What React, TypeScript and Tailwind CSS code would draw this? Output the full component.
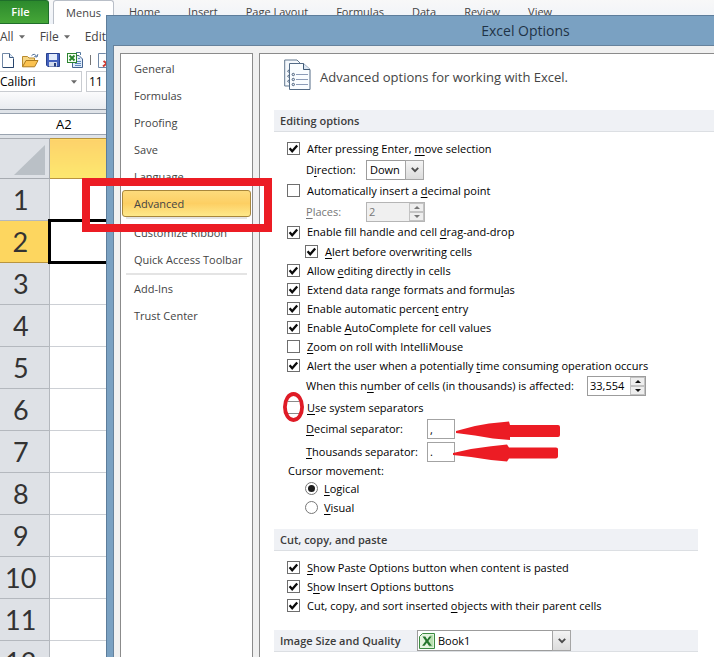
import React from "react";

/* Renders a caption; the letter after "&" is the underlined access key. */
function Caption({ text }: { text: string }) {
  const at = text.indexOf("&");
  if (at < 0) return <span>{text}</span>;
  return (
    <span className="whitespace-pre">
      {text.slice(0, at)}
      <span className="underline underline-offset-2">{text[at + 1]}</span>
      {text.slice(at + 2)}
    </span>
  );
}

function CheckRow({
  text,
  checked = false,
  className = "h-[19px]",
  circled = false,
}: {
  text: string;
  checked?: boolean;
  className?: string;
  circled?: boolean;
}) {
  return (
    <label className={`flex items-center gap-[7px] whitespace-nowrap ${className}`}>
      <span className="relative grid size-[13px] shrink-0">
        <input
          type="checkbox"
          defaultChecked={checked}
          className={`peer col-start-1 row-start-1 size-[13px] appearance-none border bg-white ${
            circled ? "border-x-white border-y-[#8a8a8a]" : "border-[#6e6e6e]"
          }`}
        />
        <svg
          viewBox="0 0 13 13"
          className="pointer-events-none invisible col-start-1 row-start-1 size-[13px] peer-checked:visible"
        >
          <path d="M2.6 6.2 L5.2 9.3 L10.2 3.4" fill="none" stroke="#0a0a0a" strokeWidth="2.3" />
        </svg>
        {circled && (
          <svg viewBox="0 0 22 30" className="pointer-events-none absolute -top-[9px] -left-[4px] h-[30px] w-[22px] max-w-none">
            <ellipse cx="10.5" cy="15" rx="8.6" ry="13" fill="none" stroke="#df1b26" strokeWidth="3.8" />
          </svg>
        )}
      </span>
      <Caption text={text} />
    </label>
  );
}

function RadioRow({ text, checked = false }: { text: string; checked?: boolean }) {
  return (
    <label className="ml-[18px] flex h-[19px] items-center gap-[6px]">
      <span className="grid size-[13px] shrink-0 place-items-center">
        <input
          type="radio"
          name="cursor-movement"
          defaultChecked={checked}
          className="peer col-start-1 row-start-1 size-[13px] appearance-none rounded-full border border-[#777] bg-white"
        />
        <span className="pointer-events-none invisible col-start-1 row-start-1 size-[7px] rounded-full bg-[#1c1c1c] peer-checked:visible" />
      </span>
      <Caption text={text} />
    </label>
  );
}

function Chevron() {
  return (
    <span className="pointer-events-none col-start-1 row-start-1 flex w-[19px] items-center justify-center justify-self-end border border-[#a5a5a5] bg-linear-to-b from-[#f4f4f4] to-[#dcdcdc]">
      <svg viewBox="0 0 8 6" className="h-[6px] w-[8px]">
        <path d="M0.8 0.8 L4 4.2 L7.2 0.8" fill="none" stroke="#4c4c4c" strokeWidth="1.9" />
      </svg>
    </span>
  );
}

function Spinner({ id, value, disabled = false }: { id: string; value: string; disabled?: boolean }) {
  const ink = disabled ? "#777" : "#111";
  return (
    <span className={`flex h-5 w-[59px] border ${disabled ? "border-[#b5b5b5] bg-[#f0f0f0] text-[#777]" : "border-[#9c9c9c] bg-white"}`}>
      <input id={id} type="text" defaultValue={value} disabled={disabled} className="w-0 min-w-0 flex-1 bg-transparent pl-[2px]" />
      <span className="flex w-[15px] shrink-0 flex-col">
        <button type="button" aria-label="Increase" disabled={disabled} className="flex flex-1 items-center justify-center border border-[#c3c3c3] bg-[#eeeeee]">
          <svg viewBox="0 0 6 3" className="h-[3px] w-[6px]"><path d="M0 3 L3 0 L6 3Z" fill={ink} /></svg>
        </button>
        <button type="button" aria-label="Decrease" disabled={disabled} className="flex flex-1 items-center justify-center border border-[#c3c3c3] bg-[#eeeeee]">
          <svg viewBox="0 0 6 3" className="h-[3px] w-[6px]"><path d="M0 0 L3 3 L6 0Z" fill={ink} /></svg>
        </button>
      </span>
    </span>
  );
}

function Arrow() {
  return (
    <svg viewBox="0 0 106 20" className="pointer-events-none absolute top-[2px] left-full h-5 w-[106px] max-w-none">
      <path d="M1 10 L20 5 L34 2.6 L54 0.6 L55 4 H103 Q105 4 105 6 V14 Q105 16 103 16 H55 V19 L38 17.6 L20 14.6 L1 12Z" fill="#ec1c24" />
    </svg>
  );
}

function SmallArrow() {
  return (
    <svg viewBox="0 0 106 18" className="pointer-events-none absolute top-[2px] right-[-104px] h-[18px] w-[106px] max-w-none">
      <path d="M0 9 L18 5 L38 2.2 L54 0.4 L56 3.4 H103 Q105 3.4 105 5 V12.6 Q105 14.4 103 14.4 H56 L54 17.4 L38 16 L18 13 L0 11Z" fill="#ec1c24" />
    </svg>
  );
}

function SeparatorRow({
  id,
  label,
  value,
  className,
  children,
}: {
  id: string;
  label: string;
  value: string;
  className: string;
  children: React.ReactNode;
}) {
  return (
    <div className={`ml-[19px] flex items-center ${className}`}>
      <label htmlFor={id} className="w-[121px] whitespace-nowrap">
        <Caption text={label} />
      </label>
      <span className="relative flex">
        <input id={id} type="text" defaultValue={value} className="h-5 w-7 border border-[#a3a3a3] bg-white pl-[2px]" />
        {children}
      </span>
    </div>
  );
}

function NavItem({ children }: { children: string }) {
  return (
    <button type="button" className="flex h-[27px] items-center px-3 text-left whitespace-nowrap">
      {children}
    </button>
  );
}

function Rule() {
  return <div className="mx-1 h-[2px] bg-[#e4e4e4]" />;
}

function Caret() {
  return (
    <svg viewBox="0 0 6 4" className="h-1 w-[6px]">
      <path d="M0 0.3 H6 L3 3.8Z" fill="#6a6a6a" />
    </svg>
  );
}

function ToolIcons() {
  return (
    <div className="flex h-[22px] items-center">
      <button type="button" aria-label="New" className="mr-2 ml-[2px]">
        <svg viewBox="0 0 12 15" className="h-[15px] w-3">
          <path d="M0.5 0.5 H7.5 L11.5 4.5 V14.5 H0.5Z" fill="#fdfeff" stroke="#7188a6" />
          <path d="M7.5 0.5 V4.5 H11.5" fill="#dbe8f7" stroke="#3d5a80" />
          <path d="M1 14.5 H11.5 V6" fill="none" stroke="#26436b" />
        </svg>
      </button>
      <button type="button" aria-label="Open" className="mr-[7px]">
        <svg viewBox="0 0 17 15" className="h-[15px] w-[17px]">
          <path d="M0.5 13.5 V3.5 H5.5 L7 5 H12.5 V7.5" fill="#f6d684" stroke="#b98a2d" />
          <path d="M0.5 13.8 L4 7.5 H16 L12.6 13.8Z" fill="#fbc250" stroke="#ad7b1d" />
          <path d="M9.5 2.7 Q12.5 -0.4 14.6 3.4 M12.3 3.5 L15 4 L15.8 1.2" fill="none" stroke="#51719b" />
        </svg>
      </button>
      <button type="button" aria-label="Save" className="mr-[7px]">
        <svg viewBox="0 0 14 14" className="h-[14px] w-[14px]">
          <path d="M0.5 0.5 H13.5 V13.5 H1.8 L0.5 12.2Z" fill="#4361bd" stroke="#27418e" />
          <rect x="3" y="1" width="8" height="6" fill="#e1ebfb" />
          <rect x="3" y="9" width="8" height="4.5" fill="#d3dcec" />
          <rect x="8" y="10" width="2" height="3.5" fill="#243c7c" />
        </svg>
      </button>
      <button type="button" aria-label="Export">
        <svg viewBox="0 0 16 16" className="size-4">
          <path d="M5.5 3.5 H12 L15.5 7 V15.5 H5.5Z" fill="#e0ecfa" stroke="#456491" />
          <path d="M8 9.5 H14 M8 11.5 H14 M8 13.5 H14 M11 6.5 H13" stroke="#5e88bd" />
          <rect x="0.5" y="1.5" width="9" height="9" fill="#f7fff5" stroke="#2c8430" />
          <path d="M2.5 3.5 L7.5 8.5 M7.5 3.5 L2.5 8.5" stroke="#27842c" strokeWidth="1.9" />
          <path d="M9 0.5 H13.5 V3" fill="none" stroke="#53789f" />
        </svg>
      </button>
      <span className="mx-[7px] h-[10px] w-px bg-[#777]" />
      <button type="button" aria-label="Delete">
        <svg viewBox="0 0 14 15" className="h-[15px] w-[14px]">
          <path d="M0.5 0.5 H7.5 L11.5 4.5 V14.5 H0.5Z" fill="#fdfeff" stroke="#7188a6" />
          <path d="M5 13.5 L13 7 M5.5 8 L13 13.5" stroke="#cf3a31" strokeWidth="2" />
        </svg>
      </button>
    </div>
  );
}

const ribbonTabs = ["Home", "Insert", "Page Layout", "Formulas", "Data", "Review", "View"];
const sheetRows = Array.from({ length: 12 }, (_, i) => i + 1);

function Workbook() {
  return (
    <div className="text-[12px] leading-4 text-[#444]">
      <div className="flex h-6 bg-linear-to-b from-[#f8f8f8] to-[#eef2f8] text-[11px]">
        <button type="button" className="w-[49px] rounded-tr-[3px] border border-l-0 border-[#1f6e2b] bg-linear-to-b from-[#2c8a2d] to-[#45a637] pr-[7px] text-white">
          <span className="font-semibold">File</span>
        </button>
        <button type="button" className="ml-1 w-[61px] rounded-t-[3px] border border-b-0 border-[#b9bfc8] bg-white">
          Menus
        </button>
        <nav className="ml-px flex">
          {ribbonTabs.map((t) => (
            <button key={t} type="button" className="px-[14px] whitespace-nowrap">
              {t}
            </button>
          ))}
        </nav>
      </div>
      <div className="flex h-[25px] items-center gap-[15px]">
        <button type="button" className="flex items-center gap-[5px]">All <Caret /></button>
        <button type="button" className="flex items-center gap-[5px]">File <Caret /></button>
        <button type="button">Edit</button>
      </div>
      <ToolIcons />
      <div className="flex h-[21px] gap-1 text-black">
        <button type="button" className="flex w-[82px] items-center justify-between border border-l-0 border-[#c9ccd1] bg-white pr-1">
          Calibri <Caret />
        </button>
        <button type="button" className="w-12 border border-[#c9ccd1] bg-white pl-[2px] text-left">11</button>
      </div>
      <div className="h-[18px] border-b border-[#8a929c] bg-linear-to-b from-[#fbfbfc] to-[#e9ecf0]" />
      <div className="h-[3px] bg-[#dfe3e8]" />
      <div className="flex h-[22px] items-center border-y border-[#9aa4b0] bg-white pl-[56px] text-[13px] text-black">A2</div>
      <div className="h-[3px] bg-[#dfe3e8]" />
      <table className="w-full table-fixed border-collapse">
        <thead>
          <tr className="h-10">
            <th className="w-[49px] border border-l-0 border-[#a7abb1] bg-[#dee1e6] p-0">
              <svg viewBox="0 0 48 38" className="h-[38px] w-12">
                <path d="M45 5 V35 H14Z" fill="#bac0c6" />
              </svg>
            </th>
            <th className="border border-[#b9953f] bg-linear-to-b from-[#fdd26a] to-[#fde86f]" />
          </tr>
        </thead>
        <tbody>
          {sheetRows.map((n) => (
            <tr key={n} className="h-[42px]">
              <th
                className={`border border-l-0 p-0 pr-[7px] font-[Lato,sans-serif] text-[27px] font-normal text-[#333] ${
                  n === 2 ? "border-[#b9953f] bg-[#fdd65f]" : "border-[#b4b8be] bg-[#dee1e6]"
                }`}
              >
                {n}
              </th>
              <td className={n === 2 ? "border-[3px] border-black bg-white" : "border border-[#cdd0d5] bg-white"} />
            </tr>
          ))}
        </tbody>
      </table>
    </div>
  );
}

function Navigation() {
  return (
    <nav className="flex w-[133px] shrink-0 flex-col border border-b-0 border-[#8b8b8b] bg-white text-[#444]">
      <div className="flex flex-col px-px pt-px">
        <NavItem>General</NavItem>
        <NavItem>Formulas</NavItem>
        <NavItem>Proofing</NavItem>
        <NavItem>Save</NavItem>
        <NavItem>Language</NavItem>
        <div className="relative z-10 flex">
          <button type="button" className="h-[27px] flex-1 rounded-[3px] border border-[#a8873c] bg-linear-to-b from-[#fddb7c] via-[#fdcf63] to-[#fee98a] pl-[11px] text-left">
            Advanced
          </button>
          <div className="pointer-events-none absolute -top-3 -right-[21px] -bottom-[15px] -left-10 border-8 border-[#ec1c24]" />
        </div>
        <Rule />
        <NavItem>Customize Ribbon</NavItem>
        <NavItem>Quick Access Toolbar</NavItem>
        <Rule />
        <NavItem>Add-Ins</NavItem>
        <NavItem>Trust Center</NavItem>
      </div>
    </nav>
  );
}

function Band({ children, className = "mr-4" }: { children: React.ReactNode; className?: string }) {
  return (
    <div className={`ml-[14px] flex h-[22px] items-center border-b border-[#dcdfe3] bg-[#eff1f5] pl-[6px] font-semibold text-[#3c3c3c] ${className}`}>
      {children}
    </div>
  );
}

function OptionsPanel() {
  return (
    <main className="min-w-0 flex-1 border-t border-l border-[#8b8b8b] bg-white text-black">
      <header className="flex h-14 items-start pt-[5px] pl-6">
        <svg viewBox="0 0 28 32" className="h-8 w-7 shrink-0">
          <path d="M0.7 1 H13 L17 5 V27 H0.7Z" fill="#f4f8fc" stroke="#62788f" />
          <path d="M5.5 4.5 H19.5 L26 10.5 V30.5 H5.5Z" fill="#fafdff" stroke="#536b86" />
          <path d="M19.5 4.5 V10.5 H26" fill="#dce7f3" stroke="#3f5874" />
          <path d="M12 15.5 H24 M12 20.5 H24 M12 25.5 H24" stroke="#8c9cb8" />
          <g fill="#dbe4f0" stroke="#52667f">
            <circle cx="9.3" cy="15.5" r="1.2" />
            <circle cx="9.3" cy="20.5" r="1.2" />
            <circle cx="9.3" cy="25.5" r="1.2" />
          </g>
          <path d="M5 11 Q2.5 11.6 4.5 13.5 M5 16 Q2.5 16.6 4.5 18.5 M5 21 Q2.5 21.6 4.5 23.5" fill="none" stroke="#52667f" />
        </svg>
        <h1 className="ml-2 pt-2 text-[13px] leading-5 whitespace-nowrap text-[#444]">Advanced options for working with Excel.</h1>
      </header>

      <Band className="">Editing options</Band>
      <section className="pt-[6px] pl-[27px]">
        <CheckRow text="After pressing Enter, &move selection" checked className="h-[21px]" />
        <div className="ml-[19px] flex h-[21px] items-center">
          <label htmlFor="direction" className="w-[60px]"><Caption text="D&irection:" /></label>
          <span className="grid h-5 w-[58px]">
            <select id="direction" className="col-start-1 row-start-1 appearance-none border border-[#9c9c9c] bg-white pl-[3px]">
              <option>Down</option>
            </select>
            <Chevron />
          </span>
        </div>
        <CheckRow text="Automatically insert a &decimal point" className="h-[21px]" />
        <div className="ml-[19px] flex h-[21px] items-center text-[#777]">
          <label htmlFor="places" className="w-[60px]"><Caption text="&Places:" /></label>
          <Spinner id="places" value="2" disabled />
        </div>
        <CheckRow text="Enable fill handle and cell &drag-and-drop" checked className="h-5" />
        <CheckRow text="&Alert before overwriting cells" checked className="ml-[18px] h-[19px]" />
        <CheckRow text="Allow &editing directly in cells" checked />
        <CheckRow text="Extend data range formats and formu&las" checked />
        <CheckRow text="Enable automatic percen&t entry" checked />
        <CheckRow text="Enable &AutoComplete for cell values" checked />
        <CheckRow text="&Zoom on roll with IntelliMouse" />
        <CheckRow text="Alert the user when a potentially &time consuming operation occurs" checked />
        <div className="ml-[19px] flex h-[22px] items-center">
          <label htmlFor="cells" className="w-[281px] whitespace-nowrap"><Caption text="When this n&umber of cells (in thousands) is affected:" /></label>
          <Spinner id="cells" value="33,554" />
        </div>
        <CheckRow text="&Use system separators" className="h-[21px]" circled />
        <SeparatorRow id="decimal" label="&Decimal separator:" value="," className="h-[22px]">
          <Arrow />
        </SeparatorRow>
        <SeparatorRow id="thousands" label="&Thousands separator:" value="." className="h-[23px]">
          <SmallArrow />
        </SeparatorRow>
        <fieldset>
          <legend className="ml-px h-4 leading-4">Cursor movement:</legend>
          <RadioRow text="&Logical" checked />
          <RadioRow text="&Visual" />
        </fieldset>
      </section>

      <div className="h-3" />
      <Band>Cut, copy, and paste</Band>
      <section className="pt-[7px] pb-[15px] pl-[27px]">
        <CheckRow text="&Show Paste Options button when content is pasted" checked />
        <CheckRow text="S&how Insert Options buttons" checked />
        <CheckRow text="Cut, copy, and sort inserted &objects with their parent cells" checked />
      </section>

      <Band>
        <label htmlFor="book" className="w-[137px] whitespace-nowrap">Image Size and Quality</label>
        <span className="grid h-[21px] w-[154px] font-normal text-black">
          <select id="book" className="col-start-1 row-start-1 appearance-none border border-[#9c9c9c] bg-white pl-5">
            <option>Book1</option>
          </select>
          <svg viewBox="0 0 16 16" className="pointer-events-none col-start-1 row-start-1 ml-[2px] size-4 self-center">
            <path d="M3.5 0.5 H15.5 V15.5 H0.5 V3.5Z" fill="#e4f3df" stroke="#3c8b41" />
            <path d="M11 2 H14.2 V14 H10Z" fill="#b9dfb0" />
            <path d="M3.5 3.5 H6.3 L8.2 6.4 L10.3 3.5 H12.6 L9.4 8 L12.8 12.7 H9.9 L7.9 9.7 L5.6 12.7 H3.1 L6.6 8Z" fill="#26762d" />
          </svg>
          <Chevron />
        </span>
      </Band>
    </main>
  );
}

export default function App() {
  return (
    <div className="relative h-screen overflow-hidden bg-white font-['Open_Sans','Noto_Sans',sans-serif]">
      <Workbook />
      <div
        role="dialog"
        aria-labelledby="dialog-title"
        className="absolute top-[15px] right-0 bottom-0 left-[106px] flex flex-col border-t border-l border-[#5d7d9b] bg-[#7aa1c2] pl-[6px] text-[11px] leading-4"
      >
        <h2 id="dialog-title" className="flex h-[29px] shrink-0 items-center justify-center pl-56 text-[14px] text-[#1f3347]">
          Excel Options
        </h2>
        <div className="flex min-h-0 flex-1 gap-[6px] border-t border-l border-[#66829c] bg-[#f0f0f0] pt-[7px] pl-[6px]">
          <Navigation />
          <OptionsPanel />
        </div>
      </div>
    </div>
  );
}
